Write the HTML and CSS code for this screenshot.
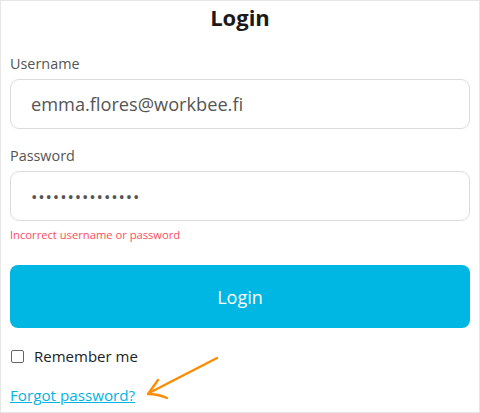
FILE: index.html
```html
<!DOCTYPE html>
<html>
<head>
<meta charset="utf-8">
<link rel="stylesheet" href="styles.css">
</head>
<body>
<div class="frame">
  <h1 class="title">Login</h1>
  <form class="form">
    <label class="label">Username</label>
    <div class="input">emma.flores@workbee.fi</div>
    <label class="label label-pw">Password</label>
    <div class="input input-pw">•••••••••••••••</div>
    <div class="error">Incorrect username or password</div>
    <button type="button" class="btn">Login</button>
    <div class="remember"><span class="check"></span><span>Remember me</span></div>
    <div class="forgot-row">
      <a class="forgot" href="#">Forgot password?</a>
      <svg class="arrow" width="90" height="64" viewBox="0 0 90 64">
        <path d="M77 16 L9 51" stroke="#ff8c00" stroke-width="2.4" fill="none" stroke-linecap="round"/>
        <path d="M18 38 L8 52 Q18 52 27 56" stroke="#ff8c00" stroke-width="2.4" fill="none" stroke-linecap="round" stroke-linejoin="round"/>
      </svg>
    </div>
  </form>
</div>
</body>
</html>
```
FILE: styles.css
```css
* { box-sizing: border-box; }
html, body { margin: 0; padding: 0; background: #fff; }
body { font-family: "Open Sans", "Noto Sans", sans-serif; }
.frame {
  width: 480px;
  height: 413px;
  border: 1px solid #e6e6e6;
  padding: 0 9px;
  overflow: hidden;
}
.title {
  margin: 0;
  text-align: center;
  font-size: 22px;
  font-weight: 700;
  color: #1a1a1a;
  line-height: 32px;
}
.form { display: flex; flex-direction: column; }
.label {
  margin-top: 21px;
  font-size: 14.4px;
  line-height: 20px;
  color: #555;
}
.label-pw { margin-top: 17px; }
.input {
  margin-top: 5px;
  height: 50px;
  border: 1px solid #dcdcdc;
  border-radius: 9px;
  padding: 0 20px;
  display: flex;
  align-items: center;
  font-size: 18.2px;
  color: #555;
}
.input-pw { letter-spacing: 0.9px; font-size: 17px; }
.error {
  margin-top: 6px;
  font-size: 11.2px;
  color: #ff4d5e;
  line-height: 16px;
}
.btn {
  margin-top: 22px;
  height: 63px;
  border: none;
  border-radius: 8px;
  background: #00b6e3;
  color: #fff;
  font-family: inherit;
  font-size: 18px;
}
.remember {
  margin-top: 18px;
  display: flex;
  align-items: center;
  font-size: 15px;
  color: #222;
}
.check {
  width: 13px;
  height: 13px;
  border: 1px solid #666;
  border-radius: 2px;
  margin: 0 10px 0 1px;
}
.forgot-row {
  position: relative;
  margin-top: 18px;
}
.forgot {
  font-size: 15.2px;
  color: #00b4e2;
  text-decoration: underline;
}
.arrow {
  position: absolute;
  left: 130px;
  top: -42px;
}
```
